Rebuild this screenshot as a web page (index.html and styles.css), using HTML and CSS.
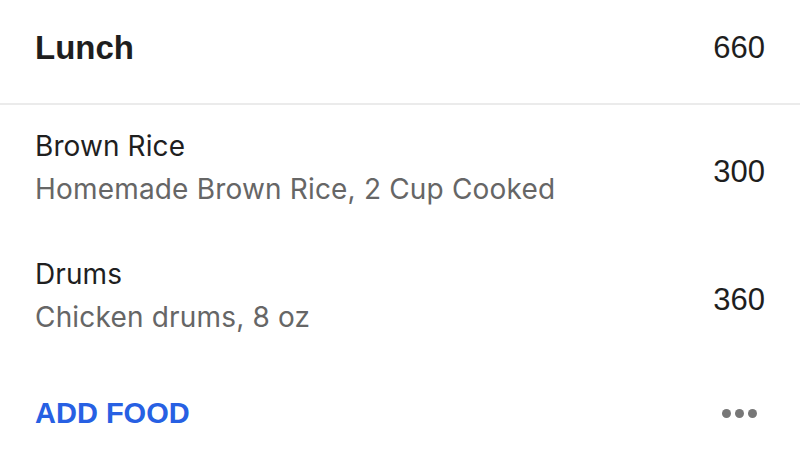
FILE: index.html
```html
<!DOCTYPE html>
<html>
<head>
<meta charset="utf-8">
<link rel="stylesheet" href="styles.css">
</head>
<body>
<div class="card">
  <div class="header">
    <div class="meal">Lunch</div>
    <div class="total">660</div>
  </div>
  <div class="item">
    <div class="info">
      <div class="name">Brown Rice</div>
      <div class="desc">Homemade Brown Rice, 2 Cup Cooked</div>
    </div>
    <div class="cal">300</div>
  </div>
  <div class="item">
    <div class="info">
      <div class="name">Drums</div>
      <div class="desc">Chicken drums, 8 oz</div>
    </div>
    <div class="cal">360</div>
  </div>
  <div class="footer">
    <div class="add">ADD FOOD</div>
    <div class="more"><span></span><span></span><span></span></div>
  </div>
</div>
</body>
</html>
```
FILE: styles.css
```css
html, body {
  margin: 0;
  padding: 0;
  background: #fff;
}
.card {
  width: 800px;
  height: 458px;
  overflow: hidden;
  font-family: Inter, "Liberation Sans", sans-serif;
  color: #1f1f1f;
}
.header {
  display: flex;
  align-items: center;
  justify-content: space-between;
  padding: 0 35px;
  box-sizing: border-box;
  height: 105px;
  border-bottom: 2px solid #ebebeb;
}
.meal {
  font-family: "Liberation Sans", Arial, sans-serif;
  font-weight: bold;
  font-size: 33px;
  color: #1e1e1e;
  margin-top: -7px;
}
.total, .cal {
  font-family: "Liberation Sans", Arial, sans-serif;
  font-size: 31px;
  color: #1e1e1e;
}
.total {
  margin-top: -7px;
}
.cal {
  margin-top: 6px;
}
.item {
  display: flex;
  align-items: center;
  justify-content: space-between;
  padding: 0 35px;
  height: 128px;
}
.info {
  display: flex;
  flex-direction: column;
  gap: 9px;
  margin-bottom: 3px;
}
.name {
  font-size: 28px;
  line-height: 34px;
  color: #1f1f1f;
  letter-spacing: 0.1px;
}
.desc {
  font-size: 28px;
  line-height: 34px;
  color: #666;
  letter-spacing: 0.18px;
}
.footer {
  display: flex;
  align-items: center;
  justify-content: space-between;
  padding: 0 35px;
  height: 104px;
}
.add {
  font-family: "Liberation Sans", Arial, sans-serif;
  font-weight: bold;
  font-size: 29px;
  color: #2760e3;
}
.more {
  display: flex;
  gap: 4px;
  margin-right: 8px;
}
.more span {
  width: 9px;
  height: 9px;
  border-radius: 50%;
  background: #777;
}
```
